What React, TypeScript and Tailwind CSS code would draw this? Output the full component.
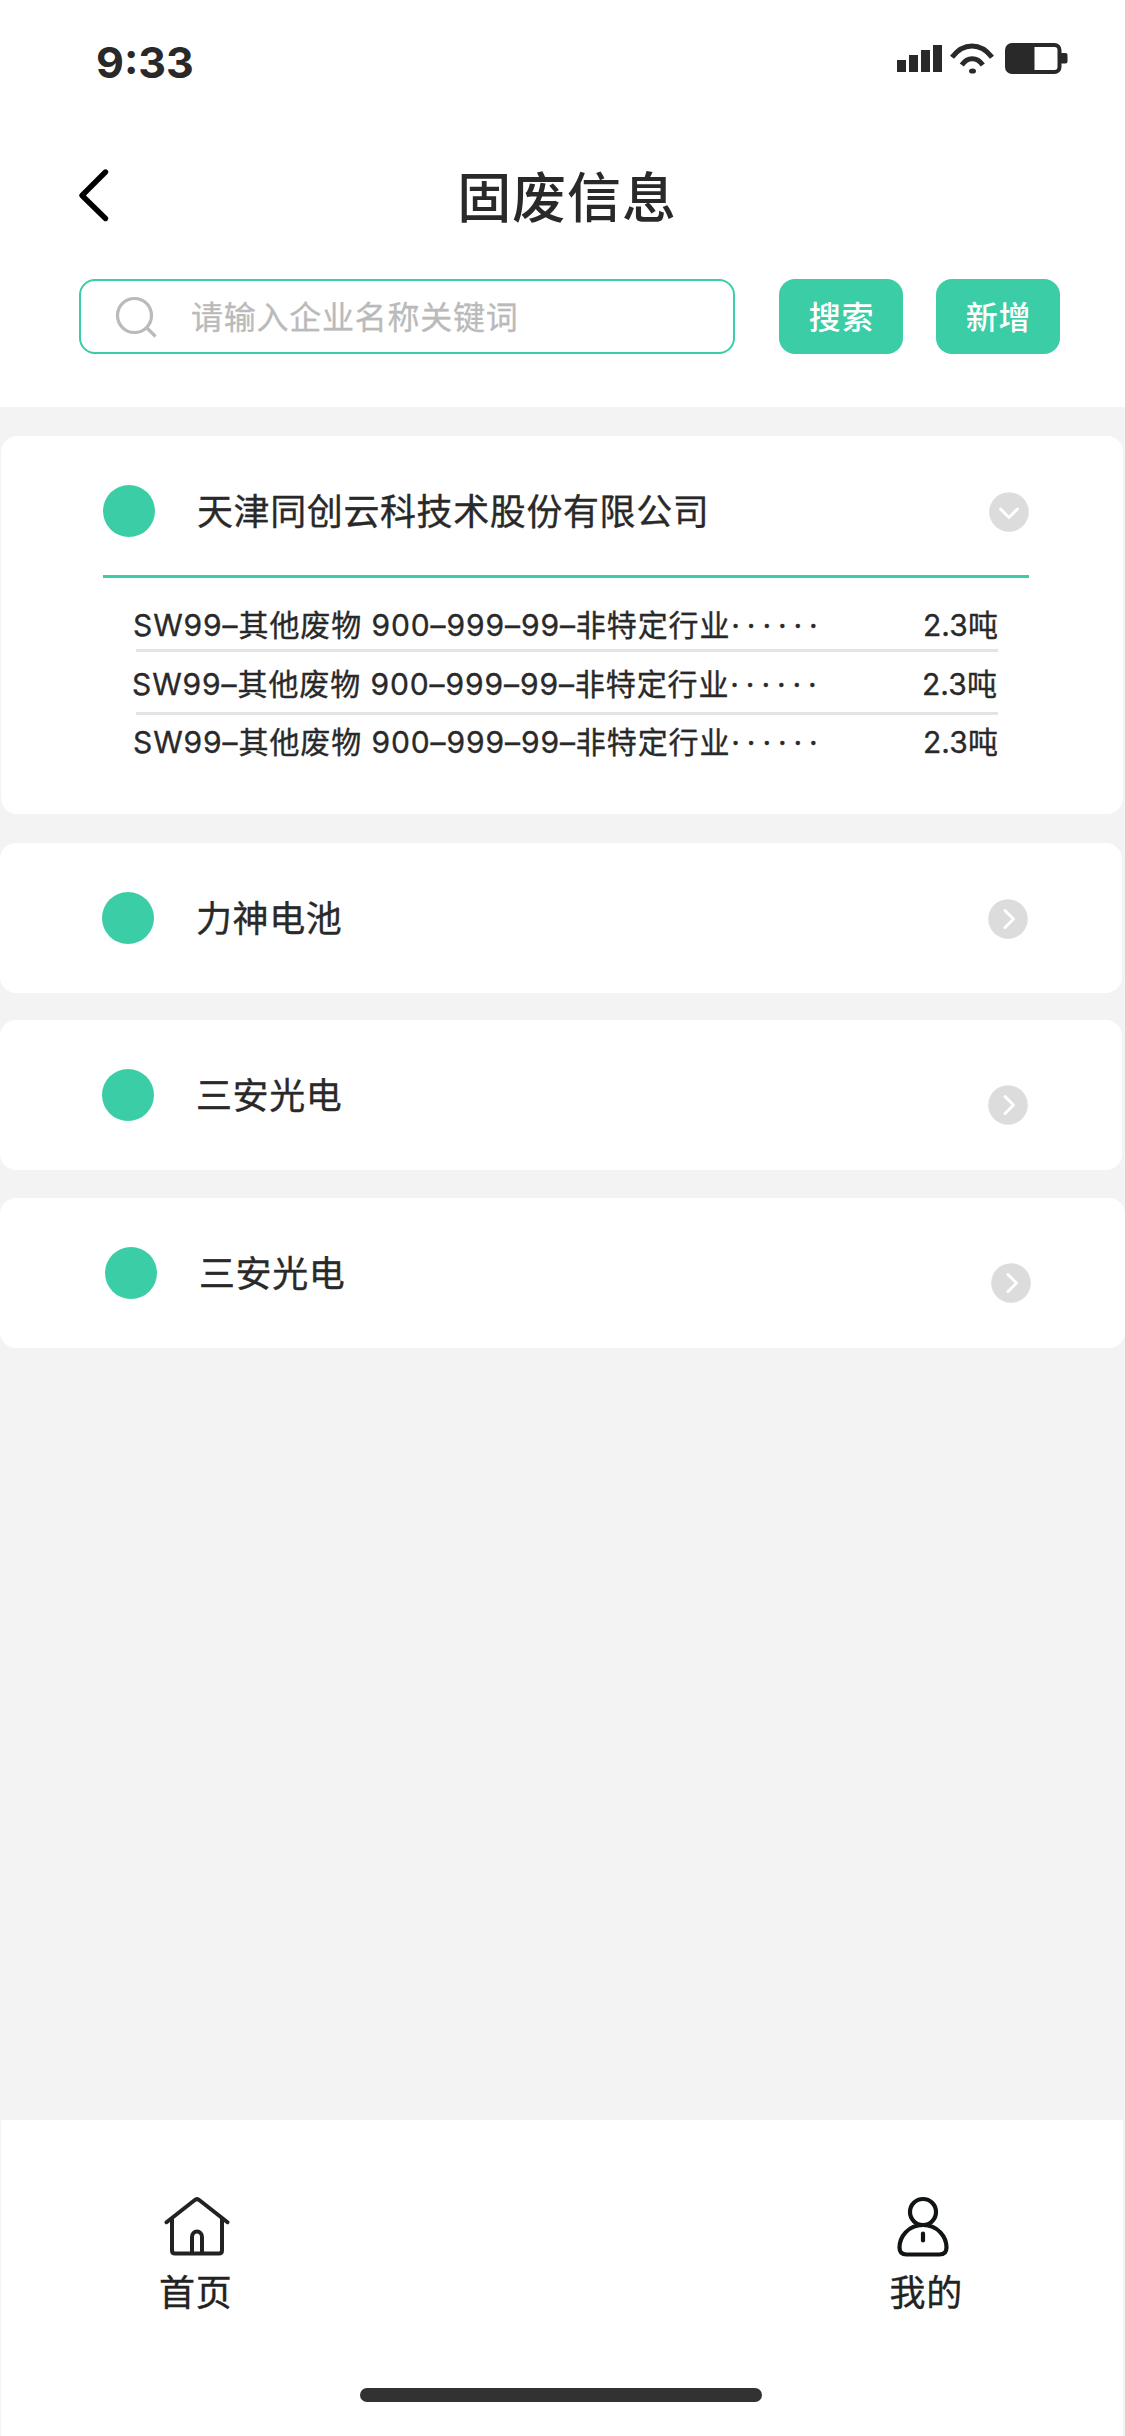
import { useState } from "react";

const companies = [
    { id: 1, name: "力神电池", card: "mt-[29px] w-[1122px] pl-[102px]", arrow: "right-[94px] top-[56px]" },
    { id: 2, name: "三安光电", card: "mt-[27px] w-[1122px] pl-[102px]", arrow: "right-[94px] top-[65px]" },
    { id: 3, name: "三安光电", card: "mt-[28px] w-[1125px] pl-[105px]", arrow: "right-[94px] top-[65px]" },
];

const wastes = [
    { id: 1, row: "h-[71px] pt-[24px] w-[997px] pl-[132px]" },
    { id: 2, row: "h-[60px] pt-[9px] w-[996px] pl-[131px]" },
    { id: 3, row: "h-[60px] pt-[4px] w-[997px] pl-[132px]" },
];

function StatusBar() {
    return (
        <div className="flex h-[120px] justify-between pl-[96px] pr-[57px]">
            <p className="pt-[36px] font-['Inter'] text-[43px] leading-[53px] font-bold">9:33</p>
            <svg className="mt-[40px]" width="172" height="36" viewBox="896 40 172 36" fill="none">
                <path d="M897 60h9v12h-9zM909 55h9v17h-9zM921 50h9v22h-9zM933 45h9v27h-9z" fill="#292929" />
                <path d="M952 57.200C963.500 42.200 980.500 42.200 992 57.200" stroke="#292929" strokeWidth="5" />
                <path d="M961.800 65C967.500 56.600 977 56.600 982.800 65" stroke="#292929" strokeWidth="5" />
                <ellipse cx="972.500" cy="71" rx="3.500" ry="2.600" fill="#292929" />
                <rect x="1007" y="45" width="52.500" height="27" rx="5" stroke="#292929" strokeWidth="4" />
                <path d="M1007 46h27.500v25H1007z" fill="#292929" />
                <path d="M1060 53h5.500q2 0 2 2v6.500q0 2-2 2H1060z" fill="#292929" />
            </svg>
        </div>
    );
}

function Arrow({ down }: { down?: boolean }) {
    return (
        <svg className={down ? "mt-[2px]" : ""} width="40" height="40" viewBox="0 0 40 40" fill="none">
            <circle cx="20" cy="20" r="19.800" fill="#dcdcdc" />
            <path
                d={down ? "M11.500 17L20 25.500L28.500 17" : "M17 11.500L25.500 20L17 28.500"}
                stroke="#fff"
                strokeWidth="3"
                strokeLinecap="round"
                strokeLinejoin="round"
            />
        </svg>
    );
}

export default function App() {
    const [keyword, setKeyword] = useState("");

    return (
        <div className="flex h-[2436px] w-[1125px] flex-col bg-[#f3f3f3] font-['Liberation_Sans','Noto_Sans_CJK_SC',sans-serif] text-[#292929]">
            <header className="h-[407px] bg-white">
                <StatusBar />
                <div className="relative flex h-[159px] justify-center">
                    <svg className="absolute left-[78px] top-[48px]" width="32" height="56" viewBox="0 0 32 56" fill="none">
                        <path d="M27.500 4L4 27.500L27.500 50.500" stroke="#000" strokeWidth="5.400" strokeLinecap="round" strokeLinejoin="round" />
                    </svg>
                    <h1 className="pl-[9px] pt-[39px] text-[54px] leading-[80px] font-medium tracking-[0.9px]">固废信息</h1>
                </div>
                <div className="flex h-[75px] pl-[79px]">
                    <div className="flex w-[656px] items-center rounded-[16px] border-2 border-[#3bcda5] pl-[34px]">
                        <svg width="42" height="42" viewBox="0 0 42 42" fill="none" stroke="#bababa" strokeWidth="3.200">
                            <circle cx="19.500" cy="19.500" r="17" />
                            <path d="M31.500 31.500L40.500 40.500" />
                        </svg>
                        <input
                            className="ml-[34px] mt-[2px] w-[500px] text-[32px] tracking-[0.75px] outline-none placeholder:text-[#bababa] [-webkit-text-stroke:0.3px]"
                            placeholder="请输入企业名称关键词"
                            value={keyword}
                            onChange={(e: any) => setKeyword(e.target.value)}
                        />
                    </div>
                    <button className="ml-[44px] w-[124px] rounded-[16px] bg-[#3bcda5] pl-px pt-[2px] text-[32px] font-medium tracking-[0.7px] text-white">搜索</button>
                    <button className="ml-[33px] w-[124px] rounded-[16px] bg-[#3bcda5] pl-px pt-[2px] text-[32px] font-medium tracking-[0.7px] text-white">新增</button>
                </div>
            </header>

            <main className="flex-1 [-webkit-text-stroke:0.35px]">
                <section className="mt-[29px] ml-px h-[378px] w-[1122px] rounded-[16px] bg-white">
                    <div className="mx-[102px] flex h-[142px] w-[926px] items-center border-b-[3px] border-[#3bcda5] pt-[11px]">
                        <div className="h-[52px] w-[52px] rounded-full bg-[#3bcda5]"></div>
                        <p className="ml-[42px] flex-1 pt-[4px] text-[36px] tracking-[0.6px]">天津同创云科技术股份有限公司</p>
                        <Arrow down />
                    </div>
                    <div className="font-['Inter','Noto_Sans_CJK_SC',sans-serif] text-[30px] leading-[46px]">
                        {wastes.map((w) => (
                            <div key={w.id}>
                                <div className={`flex justify-between ${w.row}`}>
                                    <p className="tracking-[0.9px]">SW99–其他废物 900–999–99–非特定行业<span className="ml-px tracking-[6.9px]">······</span></p>
                                    <p className="tracking-[0.1px]">2.3吨</p>
                                </div>
                                {w.id < 3 && <div className="ml-[135px] h-[3px] w-[862px] bg-[#e4e4e4]"></div>}
                            </div>
                        ))}
                    </div>
                </section>

                {companies.map((c) => (
                    <section key={c.id} className={`relative flex h-[150px] items-center rounded-[16px] bg-white ${c.card}`}>
                        <div className="h-[52px] w-[52px] rounded-full bg-[#3bcda5]"></div>
                        <p className="ml-[42px] pt-[4px] text-[36px] tracking-[0.6px]">{c.name}</p>
                        <div className={`absolute ${c.arrow}`}>
                            <Arrow />
                        </div>
                    </section>
                ))}
            </main>

            <footer className="ml-px flex h-[316px] w-[1122px] flex-col items-center bg-white">
                <nav className="flex h-[268px] w-full justify-between pl-[158px] pr-[160px] pt-[76px] text-[36px] leading-[50px] text-[#222] [-webkit-text-stroke:0.35px]">
                    <a className="flex flex-col items-center">
                        <svg className="ml-[2px]" width="68" height="62" viewBox="0 0 68 62" fill="none" stroke="#222" strokeWidth="4" strokeLinecap="round" strokeLinejoin="round">
                            <path d="M3.500 26.200L31.500 4.200Q34 2 36.500 4.200L64.500 26.200" />
                            <path d="M9 23V54.500Q9 57.500 12 57.500H56Q59 57.500 59 54.500V23" />
                            <path d="M29 57V41a5 5.500 0 0 1 10 0V57" />
                        </svg>
                        <span className="mt-[11px] tracking-[0.8px]">首页</span>
                    </a>
                    <a className="flex flex-col items-center">
                        <svg className="mr-[6px]" width="56" height="62" viewBox="0 0 56 62" fill="none" stroke="#111414" strokeWidth="4.200" strokeLinecap="round">
                            <circle cx="28" cy="16" r="13" />
                            <path d="M28 29C13 29 4.500 41 4.500 51.500Q4.500 58.500 11.500 58.500H44.500Q51.500 58.500 51.500 51.500C51.500 41 43 29 28 29Z" />
                            <path d="M28 37.500V44.500" />
                        </svg>
                        <span className="mt-[11px] tracking-[0.8px]">我的</span>
                    </a>
                </nav>
                <div className="mr-[2px] h-[14px] w-[402px] rounded-full bg-[#323232]"></div>
            </footer>
        </div>
    );
}
